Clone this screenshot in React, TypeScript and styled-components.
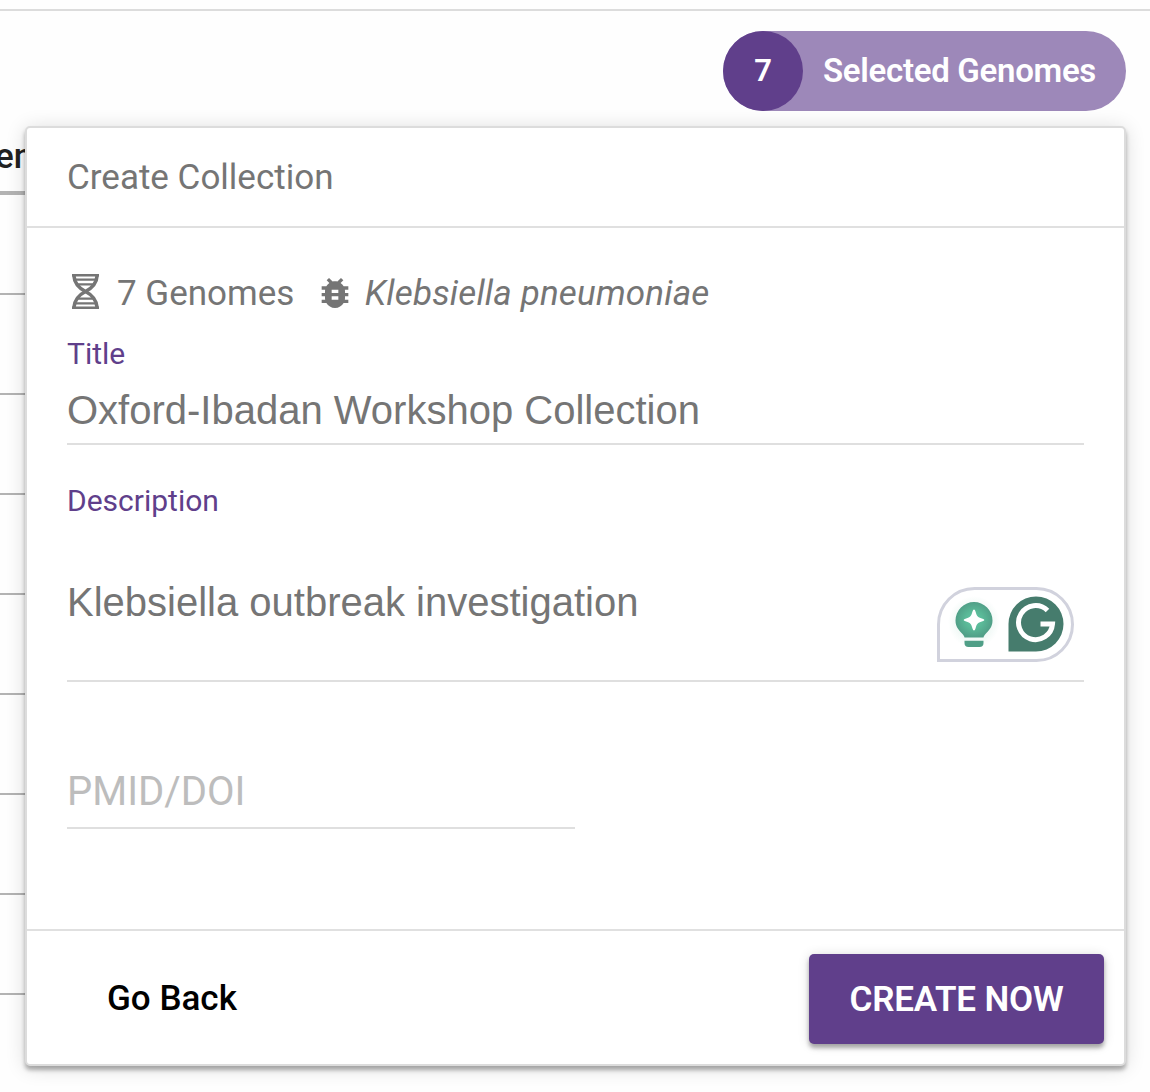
import React from "react";
import styled, { createGlobalStyle } from "styled-components";
import { MdBugReport } from "react-icons/md";

const purple = "#603f8b";
const grey = "#757575";

const GlobalStyle = createGlobalStyle`
  *, *::before, *::after { box-sizing: border-box; }
  body { margin: 0; background: #fefefe; font-family: Roboto, sans-serif; overflow: hidden; }
`;

const Page = styled.div`
  width: 1150px;
  height: 1092px;
  padding-top: 9px;
  display: flex;
  flex-direction: column;
  overflow: hidden;
`;

const Toolbar = styled.header`
  height: 117px;
  flex: none;
  border-top: 2px solid #dcdcdc;
  padding: 20px 24px 0 0;
  display: flex;
  justify-content: flex-end;
  align-items: flex-start;
`;

const Pill = styled.button`
  width: 403px;
  height: 80px;
  padding: 0;
  border: 0;
  border-radius: 40px;
  background: #9d88b9;
  color: #fff;
  display: flex;
  align-items: center;
  font: 600 33px Roboto, sans-serif;
  white-space: nowrap;
`;

const Count = styled.span`
  width: 80px;
  height: 80px;
  margin-right: 20px;
  padding-bottom: 2px;
  border-radius: 50%;
  background: ${purple};
  display: grid;
  place-items: center;
  font-size: 31px;
`;

const PillText = styled.span`
  padding-bottom: 2px;
  letter-spacing: -0.3px;
`;

const Main = styled.main`
  display: flex;
  align-items: flex-start;
`;

const TableEdge = styled.div`
  width: 25px;
  flex: none;
  overflow: hidden;
`;

const HeadCell = styled.div`
  height: 69px;
  border-bottom: 4px solid #b3b3b3;
  color: #212121;
  font-weight: 500;
  font-size: 35px;
  line-height: 62px;
  white-space: nowrap;
  text-indent: -5px;
`;

const RowCell = styled.div`
  height: 100px;
  border-bottom: 2px solid #b3b3b3;
`;

const Card = styled.section`
  position: relative;
  width: 1101px;
  height: 940px;
  flex: none;
  border: 2px solid #dcdcdc;
  border-radius: 5px;
  background: #fff;
  box-shadow: 0 4px 4px rgba(0, 0, 0, 0.3), 0 2px 20px rgba(0, 0, 0, 0.14);
  display: flex;
  flex-direction: column;
`;

const CardHeader = styled.h2`
  margin: 0;
  height: 100px;
  padding: 0 40px;
  border-bottom: 2px solid #e0e0e0;
  color: ${grey};
  font-size: 35px;
  font-weight: 400;
  line-height: 100px;
`;

const CardBody = styled.div`
  flex: 1;
  padding: 40px 40px 0;
  color: ${grey};
`;

const Summary = styled.div`
  height: 50px;
  display: flex;
  align-items: center;
  font-size: 35px;
  white-space: nowrap;

  svg { flex: none; }
`;

const GenomeCount = styled.span`
  margin: 0 20.5px 0 13px;
`;

const Species = styled.em`
  margin-left: 10px;
  letter-spacing: 0.17px;
`;

const Field = styled.div<{ $width?: string; $height: number; $top: number }>`
  display: flex;
  flex-direction: column;
  width: ${(p) => p.$width ?? "100%"};
  height: ${(p) => p.$height}px;
  padding-top: ${(p) => p.$top}px;
  border-bottom: 2px solid #dfdfdf;
`;

const FieldLabel = styled.label`
  color: ${purple};
  font-size: 30px;
  line-height: 40px;
`;

const Input = styled.input`
  border: 0;
  outline: 0;
  padding: 0;
  width: 100%;
  height: 50px;
  background: transparent;
  color: ${grey};
  font: 40px "Liberation Sans", Arial, sans-serif;

  &::placeholder {
    color: #bdbdbd;
    opacity: 1;
    font-family: Roboto, sans-serif;
  }
`;

const TitleInput = styled(Input)`
  margin-top: 11px;
`;

const DescriptionRow = styled.div`
  display: flex;
  justify-content: space-between;
  align-items: flex-start;
  padding: 56px 10px 0 0;
`;

const DescriptionInput = styled(Input)`
  width: 700px;
`;

const Assistant = styled.div`
  width: 137px;
  height: 75px;
  margin-top: 10px;
  border: 3px solid #d1d2dd;
  border-radius: 38px 38px 38px 0;
  background: #fff;
  display: flex;
  align-items: center;
  padding: 0 0 1px 10px;
  gap: 10px;

  svg { overflow: visible; }
`;

const CardFooter = styled.footer`
  height: 135px;
  border-top: 2px solid #e0e0e0;
  padding: 2px 20px 0 80px;
  display: flex;
  justify-content: space-between;
  align-items: center;
`;

const BackButton = styled.button`
  border: 0;
  padding: 0;
  background: none;
  color: #000;
  font: 500 35px Roboto, sans-serif;
`;

const CreateButton = styled.button`
  width: 295px;
  height: 90px;
  padding: 2px 0 0;
  border: 0;
  border-radius: 5px;
  background: ${purple};
  color: #fff;
  font: 600 35px Roboto, sans-serif;
  letter-spacing: -0.15px;
  box-shadow: 0 4px 4px rgba(0, 0, 0, 0.3), 0 1px 12px rgba(0, 0, 0, 0.14);
`;

const GenomeIcon = () => (
  <svg width="37" height="40" viewBox="0 0 37 40" fill="none" stroke="currentColor">
    <path d="M5 2.200H32M5 34.800H32" strokeWidth="2.600" />
    <path
      d="M6.800 2C7.300 10 12.500 15.500 18.500 18.500S29.700 27 30.200 35M30.200 2C29.700 10 24.500 15.500 18.500 18.500S7.300 27 6.800 35"
      strokeWidth="3.600"
    />
    <path d="M8 6.600H29M11 11.400H26M11 25.600H26M8 30.400H29" strokeWidth="2.200" />
  </svg>
);

const BulbIcon = () => (
  <svg width="48" height="56" viewBox="0 0 48 56">
    <defs>
      <radialGradient id="bulb">
        <stop offset="0" stopColor="#62c9a7" />
        <stop offset="0.5" stopColor="#5ab897" />
        <stop offset="1" stopColor="#509f87" />
      </radialGradient>
      <radialGradient id="glow">
        <stop offset="0.6" stopColor="#5ab897" stopOpacity="0.1" />
        <stop offset="1" stopColor="#5ab897" stopOpacity="0" />
      </radialGradient>
    </defs>
    <circle cx="24" cy="26" r="26" fill="url(#glow)" />
    <path
      fill="url(#bulb)"
      d="M24 6A18.500 18.500 0 0 0 5.500 24.500c0 7 4 10 7 13.500 1.300 1.500 1.800 2.500 2 3.500h19c.2-1 .7-2 2-3.500 3-3.500 7-6.500 7-13.500A18.500 18.500 0 0 0 24 6Z"
    />
    <path fill="#509f87" d="M14.500 44.800h19v2.200q0 4-4 4h-11q-4 0-4-4z" />
    <path
      fill="#fff"
      d="M24 13.500q1 0 1.600 2.200c1.200 4.300 2 5.500 6.300 6.700q2.500.8 2.500 1.600t-2.500 1.600c-4.300 1.200-5.100 2.400-6.300 6.700Q25 34.500 24 34.500t-1.600-2.200c-1.200-4.300-2-5.500-6.300-6.700q-2.500-.8-2.500-1.600t2.500-1.600c4.300-1.200 5.100-2.400 6.300-6.700Q23 13.500 24 13.500Z"
    />
  </svg>
);

const GrammarIcon = () => (
  <svg width="56" height="56" viewBox="0 0 56 56">
    <path fill="#467c6d" d="M28 .5A27.500 27.500 0 0 1 28 55.500H.5V28A27.500 27.500 0 0 1 28 .5Z" />
    <path fill="none" stroke="#fff" strokeWidth="5" d="M39.500 14.500A17 17 0 1 0 44.500 28H32.500" />
  </svg>
);

const ROWS = [1, 2, 3, 4, 5, 6, 7, 8];

export default function App() {
  return (
    <Page>
      <GlobalStyle />
      <Toolbar>
        <Pill>
          <Count>7</Count>
          <PillText>Selected Genomes</PillText>
        </Pill>
      </Toolbar>
      <Main>
        <TableEdge>
          <HeadCell>en</HeadCell>
          {ROWS.map((row) => (
            <RowCell key={row} />
          ))}
        </TableEdge>
        <Card>
          <CardHeader>Create Collection</CardHeader>
          <CardBody>
            <Summary>
              <GenomeIcon />
              <GenomeCount>7 Genomes</GenomeCount>
              <MdBugReport size={40} />
              <Species>Klebsiella pneumoniae</Species>
            </Summary>
            <Field $height={127} $top={16}>
              <FieldLabel htmlFor="title">Title</FieldLabel>
              <TitleInput id="title" defaultValue="Oxford-Ibadan Workshop Collection" />
            </Field>
            <Field $height={237} $top={36}>
              <FieldLabel htmlFor="description">Description</FieldLabel>
              <DescriptionRow>
                <DescriptionInput id="description" defaultValue="Klebsiella outbreak investigation" />
                <Assistant>
                  <BulbIcon />
                  <GrammarIcon />
                </Assistant>
              </DescriptionRow>
            </Field>
            <Field $width="508px" $height={147} $top={84}>
              <Input placeholder="PMID/DOI" />
            </Field>
          </CardBody>
          <CardFooter>
            <BackButton>Go Back</BackButton>
            <CreateButton>CREATE NOW</CreateButton>
          </CardFooter>
        </Card>
      </Main>
    </Page>
  );
}
